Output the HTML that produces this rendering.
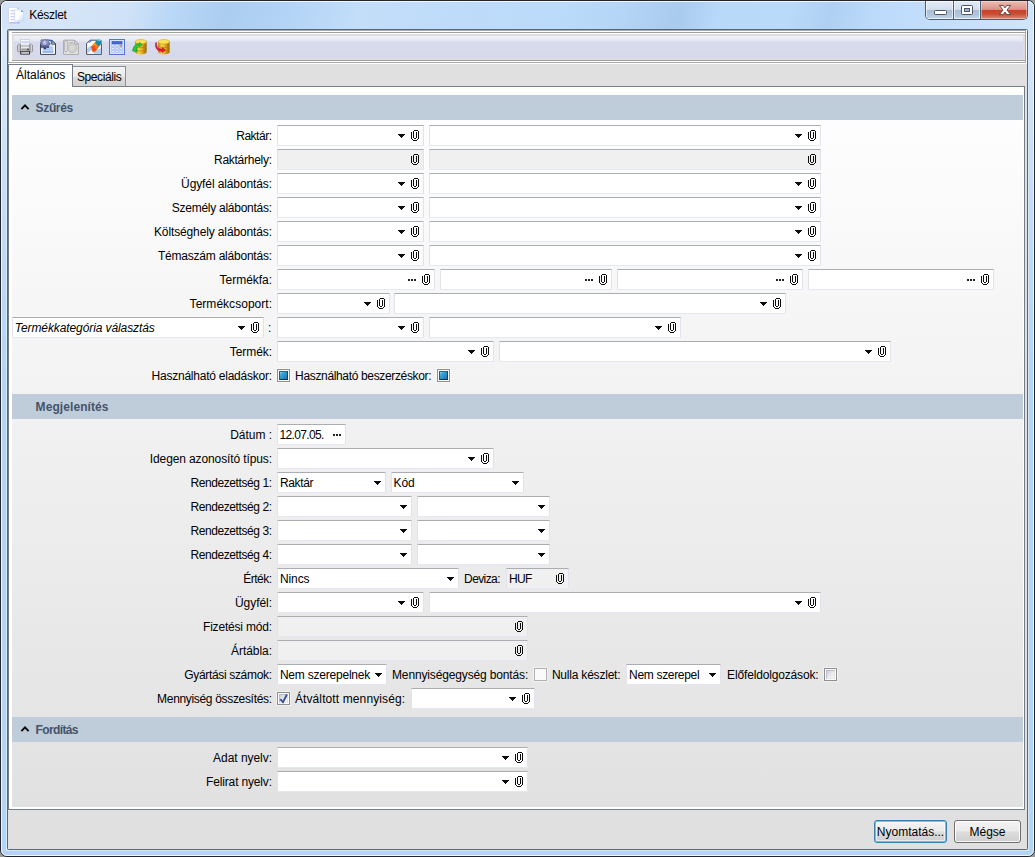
<!DOCTYPE html>
<html><head><meta charset="utf-8"><title>Készlet</title>
<style>
html,body{margin:0;padding:0}
body{width:1035px;height:857px;position:relative;overflow:hidden;background:#9a9a9a;font-family:"Liberation Sans",sans-serif;font-size:12px;color:#000}
div,svg{position:absolute;box-sizing:content-box}
svg{overflow:visible}
#win{left:0;top:0;width:1033px;height:855px;border:1px solid #20252e;border-radius:7px;background:#b3d4f5;overflow:hidden}
#tbar{left:0;top:0;width:1033px;height:29px;background:linear-gradient(104deg,#d3e3f5 0%,#d7e6f7 5%,#cfe2f7 12.5%,#bad8f7 16.5%,#abcdf0 22%,#b3d4f6 28%,#c3def9 35%,#bedbf9 43.5%,#bbdbfa 54%,#b5d5f6 60%,#a9cbee 65.5%,#b9d9f9 69.5%,#badafa 76%,#afd0f2 80%,#bbdafa 84%,#c5dffa 92%,#d0e5fb 100%)}
#winhl{left:1px;top:1px;width:1031px;height:853px;border:1px solid rgba(255,255,255,.8);border-radius:6px}
#frameL{left:2px;top:29px;width:5px;height:821px;background:linear-gradient(90deg,transparent 0,transparent 4px,#d6e9fb 4px),linear-gradient(#dbe8f6 0,#cfe2f6 12%,#bcd8f5 30%,#b3d4f5 45%)}
#frameR{left:1028px;top:29px;width:5px;height:821px;background:linear-gradient(90deg,#d6e9fb 0,#d6e9fb 1px,transparent 1px),linear-gradient(#d5e6f8 0,#cbe0f7 12%,#bcd8f5 30%,#b3d4f5 45%)}
#frameB{left:6px;top:850px;width:1023px;height:5px;background:linear-gradient(#d6e9fb 0,#d6e9fb 1px,#b3d4f5 1px);border-radius:0}
#client{left:7px;top:29px;width:1019px;height:819px;border:1px solid #59677a;border-radius:1.5px;background:#e0e0e0}
#title{left:29.3px;top:7px;letter-spacing:-.3px;font-size:12px;line-height:16px;color:#000;white-space:nowrap}
/* toolbar */
#tbunder{left:8px;top:30px;width:1019px;height:34px;background:#fff}
#tbhost{left:8px;top:30px;width:1016px;height:31px;border:1px solid #a9a9a9;background:#fff}
#tbo{left:12px;top:32px;width:1013px;height:27px;border-top:1px solid #a0a0a0;border-bottom:1px solid #a0a0a0;background:linear-gradient(#fff 0,#fff 1px,#dedede 1px)}
#tb{left:14px;top:36px;width:1009px;height:22px;background:linear-gradient(#eef1fa 0,#e9ebf5 3px,#e4e6f2 5px,#d8dbec 6px,#d6d9ea 100%)}
/* tabs */
#panel{left:8px;top:86px;width:1015px;height:722px;border:1px solid #767d88;background:#fff}
#content{left:12px;top:90px;width:1011px;height:717px;background:linear-gradient(#ffffff 0,#e1e1e1 100%)}
#tab1{left:8px;top:64px;width:63px;height:22px;border:1px solid #767d88;border-bottom:none;background:#fff}
#tab2{left:72px;top:66px;width:53px;height:19px;border:1px solid #8a9099;border-left:none;border-bottom:none;background:linear-gradient(#f3f3f3 0,#ececec 48%,#dedede 52%,#d1d1d1 100%)}
.tabt{font-size:12px;line-height:16px;white-space:nowrap}
.hd{left:12px;width:1011px;height:25px;background:#bfccda}
.f{border:1px solid #e2e3ea;border-top-color:#abadb3;border-bottom-color:#e3e9ef;background:#fff;border-radius:1px}
.f.d{background:#f0f0f0}
.t{white-space:nowrap;font-size:12px;color:#000}
.it{font-style:italic}
.t.ht{font-weight:bold;color:#44546b}
.cb{width:11px;height:11px;border:1px solid #8e8f8f;background:#fdfdfd;box-shadow:0 0 0 1px rgba(255,255,255,.45)}
.cbi{left:1px;top:1px;width:7px;height:7px;border:1px solid #1b5a94;border-color:#2366a0 #0d3f70 #0a3460 #1d5f98;background:linear-gradient(135deg,#86d6f2 0,#2fa9d8 30%,#2b8fc4 60%,#2f6fae 100%)}
.cbg{left:1px;top:1px;width:7px;height:7px;border:1px solid;border-color:#b3b7c3 #dfe0e4 #e6e6e9 #bbbfca;background:linear-gradient(135deg,#cdd1d9 0,#e6e8eb 50%,#f8f8f8 100%)}
.cbd{border-color:#b1b1b1;background:#fafafa}
.btn{height:20px;padding-top:1px;border:1px solid #707070;border-radius:3px;background:linear-gradient(#f4f4f4 0,#ebebeb 48%,#dddddd 52%,#cfcfcf 100%);box-shadow:inset 0 0 0 1px rgba(255,255,255,.85);text-align:center;line-height:21px;font-size:12px;white-space:nowrap}
/* caption buttons */
#cap{left:925px;top:1px;width:101px;height:18px;border:1px solid #4f5b6e;border-top:none;border-radius:0 0 5px 5px;overflow:hidden}
#cap div{top:0;height:18px}
.cbL{background:linear-gradient(#e3ecf6 0,#d3dfee 47%,#a9bdd7 50%,#b3c6de 80%,#c8d7ea 100%);box-shadow:inset 0 0 0 1px rgba(255,255,255,.65)}
.cbX{background:linear-gradient(#ecbdb2 0,#dc9284 47%,#c8422b 50%,#cb4c33 72%,#dd8b76 100%);box-shadow:inset 0 0 0 1px rgba(255,235,230,.45)}
</style></head><body>
<div id="win"><div id="tbar"></div></div><div id="winhl"></div>
<div id="frameL"></div><div id="frameR"></div><div id="frameB"></div>
<svg style="left:8px;top:7px;overflow:hidden" width="17" height="17" viewBox="0 0 17 17" ><rect x="0.6" y="0.6" width="9.6" height="15.2" fill="#fff" stroke="#d0d4f5" stroke-width=".8"/><path d="M2.6 3.6h4 M2.6 6.6h4 M2.6 9.6h4 M2.6 12.6h4" stroke="#cfcff3" stroke-width="1.2"/><path d="M9 0.8 L11 2.4" stroke="#8fd0ee" stroke-width="1"/><path d="M1.5 15.8 H12" stroke="#a9b4ee" stroke-width="1.2"/><path d="M6.6 2.8 H13.2 L15.6 5 V14 H6.6 Z" fill="url(#gDoc)" stroke="#d0d4f5" stroke-width=".8"/><path d="M13.2 2.8 L15.6 5 H13.2 Z" fill="#5c8fe6"/></svg>
<div id="title">Készlet</div>
<div id="cap"><div class="cbL" style="left:0;width:27px"></div><div style="left:27px;width:1px;background:#4f5b6e"></div><div class="cbL" style="left:28px;width:26px"></div><div style="left:54px;width:1px;background:#4f5b6e"></div><div class="cbX" style="left:55px;width:46px"></div></div>
<svg style="left:934px;top:10px;overflow:hidden" width="13" height="5" viewBox="0 0 13 5" ><rect x="0.5" y="0.5" width="12" height="4" rx=".8" fill="#fff" stroke="#4d5566" stroke-width="1"/></svg><svg style="left:961px;top:5px;overflow:hidden" width="12" height="10" viewBox="0 0 12 10" ><rect x="0.5" y="0.5" width="11" height="9" rx=".8" fill="#fff" stroke="#4d5566" stroke-width="1"/><rect x="3.5" y="3.5" width="5" height="3" fill="#9fb4d2" stroke="#4d5566" stroke-width="1"/></svg><svg style="left:998px;top:4px;overflow:hidden" width="14" height="12" viewBox="0 0 14 12" ><path d="M1.4 1.4 H5.2 L7 3.9 L8.8 1.4 H12.6 L9 6 L12.6 10.6 H8.8 L7 8.1 L5.2 10.6 H1.4 L5 6 Z" fill="#fff" stroke="#5a3a3a" stroke-width=".9" stroke-linejoin="round"/></svg>
<div id="client"></div>
<div id="tbunder"></div><div id="tbhost"></div><div id="tbo"></div><div id="tb"></div>
<svg width="0" height="0" style="left:0;top:0"><defs>
<linearGradient id="gPr" x1="0" y1="0" x2="0" y2="1"><stop offset="0" stop-color="#f4f4f4"/><stop offset=".5" stop-color="#dcdcdc"/><stop offset="1" stop-color="#b4b4b4"/></linearGradient>
<linearGradient id="gPs" x1="0" y1="0" x2="1" y2="0"><stop offset="0" stop-color="#8e8e8e"/><stop offset=".2" stop-color="#e6e6e6"/><stop offset=".8" stop-color="#e6e6e6"/><stop offset="1" stop-color="#8e8e8e"/></linearGradient>
<linearGradient id="gGold" x1="0" y1="0" x2="1" y2="0"><stop offset="0" stop-color="#b87c0c"/><stop offset=".3" stop-color="#f6d640"/><stop offset=".6" stop-color="#e4ad22"/><stop offset="1" stop-color="#9a6406"/></linearGradient>
<linearGradient id="gGear" x1="0" y1="0" x2="0" y2="1"><stop offset="0" stop-color="#a4a6cc"/><stop offset=".6" stop-color="#7d80ae"/><stop offset="1" stop-color="#2a3066"/></linearGradient>
<linearGradient id="gPl" x1="0" y1="0" x2="1" y2="0"><stop offset="0" stop-color="#8a8a8a"/><stop offset=".5" stop-color="#e2e2e2"/><stop offset="1" stop-color="#9a9a9a"/></linearGradient>
<linearGradient id="gPl2" x1="0" y1="0" x2="1" y2="0"><stop offset="0" stop-color="#9a9a9a"/><stop offset=".5" stop-color="#e2e2e2"/><stop offset="1" stop-color="#8a8a8a"/></linearGradient>
<linearGradient id="gEr" x1="0" y1="0" x2="1" y2="1"><stop offset="0" stop-color="#ffc21a"/><stop offset="1" stop-color="#f0401a"/></linearGradient>
<linearGradient id="gDoc" x1="0" y1="0" x2="1" y2="1"><stop offset="0" stop-color="#ffffff"/><stop offset=".5" stop-color="#ffffff"/><stop offset="1" stop-color="#b9dcf7"/></linearGradient>
</defs></svg><svg style="left:17px;top:39px;overflow:hidden" width="16" height="16" viewBox="0 0 16 16" ><rect x="3.6" y="0.4" width="9" height="6.6" fill="#f6f7ff" stroke="#c2c2c2" stroke-width=".6"/><rect x="4.4" y="2.4" width="7.4" height="1.3" fill="#b7c8fb"/><rect x="4.4" y="4.6" width="7.4" height=".9" fill="#d5ddfb"/><path d="M3.4 5.2 H1.8 Q0.4 5.4 0.4 8 V11.4 Q0.5 13.2 2.4 13.2 H3.4 Z" fill="url(#gPl)" stroke="#6a6a6a" stroke-width=".4"/><path d="M12.8 5.2 H14.4 Q15.8 5.4 15.8 8 V11.4 Q15.7 13.2 13.8 13.2 H12.8 Z" fill="url(#gPl2)" stroke="#6a6a6a" stroke-width=".4"/><rect x="3.4" y="7" width="9.4" height="6" fill="url(#gPr)" stroke="#555" stroke-width=".5"/><rect x="4.4" y="9.6" width="7.6" height="1.8" fill="#9c9c9c"/><rect x="10" y="9.6" width="1.8" height="1.8" fill="#555"/><rect x="3.7" y="12.8" width="8.8" height="2.3" fill="#fff" stroke="#1e1e1e" stroke-width=".9"/></svg><svg style="left:40px;top:39px;overflow:hidden" width="16" height="16" viewBox="0 0 16 16" ><path d="M0.5 5 V15.4 H15.5 V5 L11.8 1.3 H6 Z" fill="#fff" stroke="#2b2f3a" stroke-width=".9"/><path d="M11.6 1 L15.7 5.2 H11.6 Z" fill="#a8b8c4" stroke="#2b2f3a" stroke-width=".7"/><path d="M10 0.8 L12.2 3.8" stroke="#2f6fe2" stroke-width="1.3"/><path d="M12.2 2.2 l1.2 1.4" stroke="#6fa27a" stroke-width="1"/><rect x="2.4" y="8.4" width="11" height="1.1" fill="#6f9bf0"/><rect x="2.4" y="10.4" width="11" height="1.1" fill="#7fa6f2"/><rect x="2.4" y="12.3" width="11" height="1.3" fill="#6693ee"/><rect x="9" y="6.4" width="4.4" height="1" fill="#a9c2f6"/><path d="M10.12 3.79 L10.12 5.61 L8.77 5.69 L8.34 6.74 L9.24 7.75 L7.95 9.04 L6.94 8.14 L5.89 8.57 L5.81 9.92 L3.99 9.92 L3.91 8.57 L2.86 8.14 L1.85 9.04 L0.56 7.75 L1.46 6.74 L1.03 5.69 L-0.32 5.61 L-0.32 3.79 L1.03 3.71 L1.46 2.66 L0.56 1.65 L1.85 0.36 L2.86 1.26 L3.91 0.83 L3.99 -0.52 L5.81 -0.52 L5.89 0.83 L6.94 1.26 L7.95 0.36 L9.24 1.65 L8.34 2.66 L8.77 3.71Z" fill="url(#gGear)" stroke="#262c5e" stroke-width=".5"/><circle cx="4.7" cy="3.9" r="1.9" fill="#c9cdee"/><circle cx="4.6" cy="3.8" r="1.1" fill="#74aaf8"/><circle cx="4.4" cy="3.4" r=".5" fill="#fff"/></svg><svg style="left:63px;top:39px;overflow:hidden" width="16" height="16" viewBox="0 0 16 16" ><path d="M0.6 1.2 V15.4 H15.4 V5.2 L11.6 1.2 Z" fill="#e3e3e3" stroke="#a9a9a9" stroke-width="1"/><path d="M11.4 1 L15.6 5.4 H11.4 Z" fill="#d0d0d0" stroke="#a9a9a9" stroke-width=".8"/><rect x="1.8" y="1.6" width="2.4" height="11.2" rx="1.2" fill="#f2f2f2" stroke="#9b9b9b" stroke-width=".8"/><circle cx="9.2" cy="9" r="4.6" fill="#d2d2d2" stroke="#b5b5b5" stroke-width=".8"/><circle cx="9.2" cy="9" r="2.6" fill="#e6e6e6" stroke="#bdbdbd" stroke-width=".6"/><circle cx="9.2" cy="9" r="1" fill="#c4c4c4"/><path d="M5 4 L10 3.2" stroke="#bbb" stroke-width="1"/></svg><svg style="left:86px;top:39px;overflow:hidden" width="16" height="16" viewBox="0 0 16 16" ><path d="M0.6 4.6 V15.4 H15.4 V5 L11.6 1.2 H4 Z" fill="#fff" stroke="#2e3340" stroke-width=".85"/><path d="M1.2 14.8 V9.5 L4.5 6.8 L7 10 L9.5 12 L14.8 9 V14.8 Z" fill="#a9cdf6"/><path d="M1.2 14.8 L5.2 11 L8.4 14.8 Z" fill="#fff"/><path d="M3 3.6 L5.2 1.4" stroke="#4a78d8" stroke-width="1.3"/><path d="M4.6 7.8 L10.4 1.4 L15.6 3.4 L10.2 12 L6.6 13.2 Z" fill="url(#gEr)"/><path d="M10.2 1.6 L12.6 0.4 L15.9 1.6 L15.4 4.6 L13 7.4 L9.2 4 Z" fill="#178aa8"/><path d="M10.6 1.2 L13 0.2 L15.9 1.3 L13.6 2.6 Z" fill="#5fc4d8"/><path d="M5.2 7.6 L7 12.6 L10 11.6 L8.6 6.2 Z" fill="#e8351c" opacity=".75"/></svg><svg style="left:109px;top:39px;overflow:hidden" width="16" height="16" viewBox="0 0 16 16" ><rect x="0.5" y="0.5" width="15" height="15" fill="#c2d3f8" stroke="#5876c9" stroke-width="1"/><rect x="1.6" y="1.6" width="12.8" height="12.8" fill="none" stroke="#dbe6fd" stroke-width=".8"/><rect x="3" y="2.4" width="10" height="2.6" fill="#4468d6" stroke="#2f4fb2" stroke-width=".5"/><circle cx="4" cy="6.6" r="1.15" fill="#fbfcff" stroke="#8aa3e6" stroke-width=".5"/><circle cx="8" cy="6.6" r="1.15" fill="#fbfcff" stroke="#8aa3e6" stroke-width=".5"/><circle cx="12" cy="6.6" r="1.15" fill="#f08a3c" stroke="#8aa3e6" stroke-width=".5"/><circle cx="4" cy="9.6" r="1.15" fill="#fbfcff" stroke="#8aa3e6" stroke-width=".5"/><circle cx="8" cy="9.6" r="1.15" fill="#fbfcff" stroke="#8aa3e6" stroke-width=".5"/><circle cx="12" cy="9.6" r="1.15" fill="#fbfcff" stroke="#8aa3e6" stroke-width=".5"/><circle cx="4" cy="12.6" r="1.15" fill="#fbfcff" stroke="#8aa3e6" stroke-width=".5"/><circle cx="8" cy="12.6" r="1.15" fill="#fbfcff" stroke="#8aa3e6" stroke-width=".5"/><circle cx="12" cy="12.6" r="1.15" fill="#fbfcff" stroke="#8aa3e6" stroke-width=".5"/></svg><svg style="left:132px;top:39px;overflow:hidden" width="17" height="16" viewBox="0 0 17 16" ><path d="M3.2 2.6 V13 A5 2.3 0 0 0 14.6 13 V2.6 Z" fill="url(#gGold)"/><ellipse cx="8.9" cy="2.7" rx="5.7" ry="2.2" fill="#f9e35a" stroke="#c99a1a" stroke-width=".5"/><path d="M3.2 6.4 A5.7 2.2 0 0 0 14.6 6.4" fill="none" stroke="#a8730c" stroke-width=".7" opacity=".8"/><path d="M3.2 9.8 A5.7 2.2 0 0 0 14.6 9.8" fill="none" stroke="#a8730c" stroke-width=".7" opacity=".8"/><path d="M0.6 12 C1.2 7.8 3 4.8 7.8 4.6 L7.6 3.4 L10.2 5.6 L7.4 7.8 L7.5 6.6 C5.2 7 4.4 9.4 5 12.6 Z" fill="#22cc3a" stroke="#0d8f22" stroke-width=".6"/></svg><svg style="left:155px;top:39px;overflow:hidden" width="17" height="16" viewBox="0 0 17 16" ><path d="M3.2 2.6 V13 A5 2.3 0 0 0 14.6 13 V2.6 Z" fill="url(#gGold)"/><ellipse cx="8.9" cy="2.7" rx="5.7" ry="2.2" fill="#f9e35a" stroke="#c99a1a" stroke-width=".5"/><path d="M3.2 6.4 A5.7 2.2 0 0 0 14.6 6.4" fill="none" stroke="#a8730c" stroke-width=".7" opacity=".8"/><path d="M3.2 9.8 A5.7 2.2 0 0 0 14.6 9.8" fill="none" stroke="#a8730c" stroke-width=".7" opacity=".8"/><path d="M1.4 3.4 C1.2 8 3 10 7.4 10 L7.2 8.6 L10.4 11 L7 13.6 L7.2 12.2 C2.6 12.6 0 9.4 0.6 4 Z" fill="#f0143c" stroke="#b00d2a" stroke-width=".6"/></svg>
<div id="panel"></div><div id="content"></div>
<div id="tab2"></div><div id="tab1"></div>
<div class="tabt" style="left:16px;top:67px">Általános</div>
<div class="tabt" style="left:77px;top:69px;letter-spacing:-.42px">Speciális</div>
<div class="hd" style="top:95px"></div>
<svg class="i" style="left:20px;top:103px" width="10" height="7" viewBox="0 0 10 7"><path d="M1.4 6.1 L5 2.3 L8.6 6.1" fill="none" stroke="#0a0a0a" stroke-width="1.9"/></svg>
<div class="t ht" style="left:35.6px;top:96px;height:25px;line-height:25px;letter-spacing:-0.352px;">Szűrés</div>
<div class="t " style="right:763.48px;top:126px;height:21px;line-height:21px;letter-spacing:-0.481px;">Raktár:</div>
<div class="f" style="left:277px;top:125px;width:145px;height:19px"></div>
<svg class="i" style="left:411px;top:130px" width="8" height="11" viewBox="0 0 8 11" shape-rendering="crispEdges"><path d="M3 0h1v1h-1zM4 0h1v1h-1zM5 0h1v1h-1zM6 0h1v1h-1zM2 1h1v1h-1zM7 1h1v1h-1zM0 2h1v1h-1zM2 2h1v1h-1zM5 2h1v1h-1zM7 2h1v1h-1zM0 3h1v1h-1zM2 3h1v1h-1zM5 3h1v1h-1zM7 3h1v1h-1zM0 4h1v1h-1zM2 4h1v1h-1zM5 4h1v1h-1zM7 4h1v1h-1zM0 5h1v1h-1zM2 5h1v1h-1zM5 5h1v1h-1zM7 5h1v1h-1zM0 6h1v1h-1zM2 6h1v1h-1zM5 6h1v1h-1zM7 6h1v1h-1zM0 7h1v1h-1zM2 7h1v1h-1zM5 7h1v1h-1zM7 7h1v1h-1zM0 8h1v1h-1zM3 8h1v1h-1zM4 8h1v1h-1zM7 8h1v1h-1zM1 9h1v1h-1zM6 9h1v1h-1zM2 10h1v1h-1zM3 10h1v1h-1zM4 10h1v1h-1zM5 10h1v1h-1z" fill="#0c0c0c"/></svg>
<svg class="i" style="left:398px;top:134px" width="7" height="4" viewBox="0 0 7 4"><path d="M0 0h7v1h-7z M1 1h5v1h-5z M2 2h3v1h-3z M3 3h1v1h-1z" fill="#0c0c0c" shape-rendering="crispEdges"/></svg>
<div class="f" style="left:429px;top:125px;width:390px;height:19px"></div>
<svg class="i" style="left:808px;top:130px" width="8" height="11" viewBox="0 0 8 11" shape-rendering="crispEdges"><path d="M3 0h1v1h-1zM4 0h1v1h-1zM5 0h1v1h-1zM6 0h1v1h-1zM2 1h1v1h-1zM7 1h1v1h-1zM0 2h1v1h-1zM2 2h1v1h-1zM5 2h1v1h-1zM7 2h1v1h-1zM0 3h1v1h-1zM2 3h1v1h-1zM5 3h1v1h-1zM7 3h1v1h-1zM0 4h1v1h-1zM2 4h1v1h-1zM5 4h1v1h-1zM7 4h1v1h-1zM0 5h1v1h-1zM2 5h1v1h-1zM5 5h1v1h-1zM7 5h1v1h-1zM0 6h1v1h-1zM2 6h1v1h-1zM5 6h1v1h-1zM7 6h1v1h-1zM0 7h1v1h-1zM2 7h1v1h-1zM5 7h1v1h-1zM7 7h1v1h-1zM0 8h1v1h-1zM3 8h1v1h-1zM4 8h1v1h-1zM7 8h1v1h-1zM1 9h1v1h-1zM6 9h1v1h-1zM2 10h1v1h-1zM3 10h1v1h-1zM4 10h1v1h-1zM5 10h1v1h-1z" fill="#0c0c0c"/></svg>
<svg class="i" style="left:795px;top:134px" width="7" height="4" viewBox="0 0 7 4"><path d="M0 0h7v1h-7z M1 1h5v1h-5z M2 2h3v1h-3z M3 3h1v1h-1z" fill="#0c0c0c" shape-rendering="crispEdges"/></svg>
<div class="t " style="right:763.27px;top:150px;height:21px;line-height:21px;letter-spacing:-0.270px;">Raktárhely:</div>
<div class="f d" style="left:277px;top:149px;width:145px;height:19px"></div>
<svg class="i" style="left:411px;top:154px" width="8" height="11" viewBox="0 0 8 11" shape-rendering="crispEdges"><path d="M3 0h1v1h-1zM4 0h1v1h-1zM5 0h1v1h-1zM6 0h1v1h-1zM2 1h1v1h-1zM7 1h1v1h-1zM0 2h1v1h-1zM2 2h1v1h-1zM5 2h1v1h-1zM7 2h1v1h-1zM0 3h1v1h-1zM2 3h1v1h-1zM5 3h1v1h-1zM7 3h1v1h-1zM0 4h1v1h-1zM2 4h1v1h-1zM5 4h1v1h-1zM7 4h1v1h-1zM0 5h1v1h-1zM2 5h1v1h-1zM5 5h1v1h-1zM7 5h1v1h-1zM0 6h1v1h-1zM2 6h1v1h-1zM5 6h1v1h-1zM7 6h1v1h-1zM0 7h1v1h-1zM2 7h1v1h-1zM5 7h1v1h-1zM7 7h1v1h-1zM0 8h1v1h-1zM3 8h1v1h-1zM4 8h1v1h-1zM7 8h1v1h-1zM1 9h1v1h-1zM6 9h1v1h-1zM2 10h1v1h-1zM3 10h1v1h-1zM4 10h1v1h-1zM5 10h1v1h-1z" fill="#0c0c0c"/></svg>
<div class="f d" style="left:429px;top:149px;width:390px;height:19px"></div>
<svg class="i" style="left:808px;top:154px" width="8" height="11" viewBox="0 0 8 11" shape-rendering="crispEdges"><path d="M3 0h1v1h-1zM4 0h1v1h-1zM5 0h1v1h-1zM6 0h1v1h-1zM2 1h1v1h-1zM7 1h1v1h-1zM0 2h1v1h-1zM2 2h1v1h-1zM5 2h1v1h-1zM7 2h1v1h-1zM0 3h1v1h-1zM2 3h1v1h-1zM5 3h1v1h-1zM7 3h1v1h-1zM0 4h1v1h-1zM2 4h1v1h-1zM5 4h1v1h-1zM7 4h1v1h-1zM0 5h1v1h-1zM2 5h1v1h-1zM5 5h1v1h-1zM7 5h1v1h-1zM0 6h1v1h-1zM2 6h1v1h-1zM5 6h1v1h-1zM7 6h1v1h-1zM0 7h1v1h-1zM2 7h1v1h-1zM5 7h1v1h-1zM7 7h1v1h-1zM0 8h1v1h-1zM3 8h1v1h-1zM4 8h1v1h-1zM7 8h1v1h-1zM1 9h1v1h-1zM6 9h1v1h-1zM2 10h1v1h-1zM3 10h1v1h-1zM4 10h1v1h-1zM5 10h1v1h-1z" fill="#0c0c0c"/></svg>
<div class="t " style="right:763.11px;top:174px;height:21px;line-height:21px;letter-spacing:-0.115px;">Ügyfél alábontás:</div>
<div class="f" style="left:277px;top:173px;width:145px;height:19px"></div>
<svg class="i" style="left:411px;top:178px" width="8" height="11" viewBox="0 0 8 11" shape-rendering="crispEdges"><path d="M3 0h1v1h-1zM4 0h1v1h-1zM5 0h1v1h-1zM6 0h1v1h-1zM2 1h1v1h-1zM7 1h1v1h-1zM0 2h1v1h-1zM2 2h1v1h-1zM5 2h1v1h-1zM7 2h1v1h-1zM0 3h1v1h-1zM2 3h1v1h-1zM5 3h1v1h-1zM7 3h1v1h-1zM0 4h1v1h-1zM2 4h1v1h-1zM5 4h1v1h-1zM7 4h1v1h-1zM0 5h1v1h-1zM2 5h1v1h-1zM5 5h1v1h-1zM7 5h1v1h-1zM0 6h1v1h-1zM2 6h1v1h-1zM5 6h1v1h-1zM7 6h1v1h-1zM0 7h1v1h-1zM2 7h1v1h-1zM5 7h1v1h-1zM7 7h1v1h-1zM0 8h1v1h-1zM3 8h1v1h-1zM4 8h1v1h-1zM7 8h1v1h-1zM1 9h1v1h-1zM6 9h1v1h-1zM2 10h1v1h-1zM3 10h1v1h-1zM4 10h1v1h-1zM5 10h1v1h-1z" fill="#0c0c0c"/></svg>
<svg class="i" style="left:398px;top:182px" width="7" height="4" viewBox="0 0 7 4"><path d="M0 0h7v1h-7z M1 1h5v1h-5z M2 2h3v1h-3z M3 3h1v1h-1z" fill="#0c0c0c" shape-rendering="crispEdges"/></svg>
<div class="f" style="left:429px;top:173px;width:390px;height:19px"></div>
<svg class="i" style="left:808px;top:178px" width="8" height="11" viewBox="0 0 8 11" shape-rendering="crispEdges"><path d="M3 0h1v1h-1zM4 0h1v1h-1zM5 0h1v1h-1zM6 0h1v1h-1zM2 1h1v1h-1zM7 1h1v1h-1zM0 2h1v1h-1zM2 2h1v1h-1zM5 2h1v1h-1zM7 2h1v1h-1zM0 3h1v1h-1zM2 3h1v1h-1zM5 3h1v1h-1zM7 3h1v1h-1zM0 4h1v1h-1zM2 4h1v1h-1zM5 4h1v1h-1zM7 4h1v1h-1zM0 5h1v1h-1zM2 5h1v1h-1zM5 5h1v1h-1zM7 5h1v1h-1zM0 6h1v1h-1zM2 6h1v1h-1zM5 6h1v1h-1zM7 6h1v1h-1zM0 7h1v1h-1zM2 7h1v1h-1zM5 7h1v1h-1zM7 7h1v1h-1zM0 8h1v1h-1zM3 8h1v1h-1zM4 8h1v1h-1zM7 8h1v1h-1zM1 9h1v1h-1zM6 9h1v1h-1zM2 10h1v1h-1zM3 10h1v1h-1zM4 10h1v1h-1zM5 10h1v1h-1z" fill="#0c0c0c"/></svg>
<svg class="i" style="left:795px;top:182px" width="7" height="4" viewBox="0 0 7 4"><path d="M0 0h7v1h-7z M1 1h5v1h-5z M2 2h3v1h-3z M3 3h1v1h-1z" fill="#0c0c0c" shape-rendering="crispEdges"/></svg>
<div class="t " style="right:763.27px;top:198px;height:21px;line-height:21px;letter-spacing:-0.267px;">Személy alábontás:</div>
<div class="f" style="left:277px;top:197px;width:145px;height:19px"></div>
<svg class="i" style="left:411px;top:202px" width="8" height="11" viewBox="0 0 8 11" shape-rendering="crispEdges"><path d="M3 0h1v1h-1zM4 0h1v1h-1zM5 0h1v1h-1zM6 0h1v1h-1zM2 1h1v1h-1zM7 1h1v1h-1zM0 2h1v1h-1zM2 2h1v1h-1zM5 2h1v1h-1zM7 2h1v1h-1zM0 3h1v1h-1zM2 3h1v1h-1zM5 3h1v1h-1zM7 3h1v1h-1zM0 4h1v1h-1zM2 4h1v1h-1zM5 4h1v1h-1zM7 4h1v1h-1zM0 5h1v1h-1zM2 5h1v1h-1zM5 5h1v1h-1zM7 5h1v1h-1zM0 6h1v1h-1zM2 6h1v1h-1zM5 6h1v1h-1zM7 6h1v1h-1zM0 7h1v1h-1zM2 7h1v1h-1zM5 7h1v1h-1zM7 7h1v1h-1zM0 8h1v1h-1zM3 8h1v1h-1zM4 8h1v1h-1zM7 8h1v1h-1zM1 9h1v1h-1zM6 9h1v1h-1zM2 10h1v1h-1zM3 10h1v1h-1zM4 10h1v1h-1zM5 10h1v1h-1z" fill="#0c0c0c"/></svg>
<svg class="i" style="left:398px;top:206px" width="7" height="4" viewBox="0 0 7 4"><path d="M0 0h7v1h-7z M1 1h5v1h-5z M2 2h3v1h-3z M3 3h1v1h-1z" fill="#0c0c0c" shape-rendering="crispEdges"/></svg>
<div class="f" style="left:429px;top:197px;width:390px;height:19px"></div>
<svg class="i" style="left:808px;top:202px" width="8" height="11" viewBox="0 0 8 11" shape-rendering="crispEdges"><path d="M3 0h1v1h-1zM4 0h1v1h-1zM5 0h1v1h-1zM6 0h1v1h-1zM2 1h1v1h-1zM7 1h1v1h-1zM0 2h1v1h-1zM2 2h1v1h-1zM5 2h1v1h-1zM7 2h1v1h-1zM0 3h1v1h-1zM2 3h1v1h-1zM5 3h1v1h-1zM7 3h1v1h-1zM0 4h1v1h-1zM2 4h1v1h-1zM5 4h1v1h-1zM7 4h1v1h-1zM0 5h1v1h-1zM2 5h1v1h-1zM5 5h1v1h-1zM7 5h1v1h-1zM0 6h1v1h-1zM2 6h1v1h-1zM5 6h1v1h-1zM7 6h1v1h-1zM0 7h1v1h-1zM2 7h1v1h-1zM5 7h1v1h-1zM7 7h1v1h-1zM0 8h1v1h-1zM3 8h1v1h-1zM4 8h1v1h-1zM7 8h1v1h-1zM1 9h1v1h-1zM6 9h1v1h-1zM2 10h1v1h-1zM3 10h1v1h-1zM4 10h1v1h-1zM5 10h1v1h-1z" fill="#0c0c0c"/></svg>
<svg class="i" style="left:795px;top:206px" width="7" height="4" viewBox="0 0 7 4"><path d="M0 0h7v1h-7z M1 1h5v1h-5z M2 2h3v1h-3z M3 3h1v1h-1z" fill="#0c0c0c" shape-rendering="crispEdges"/></svg>
<div class="t " style="right:763.13px;top:222px;height:21px;line-height:21px;letter-spacing:-0.131px;">Költséghely alábontás:</div>
<div class="f" style="left:277px;top:221px;width:145px;height:19px"></div>
<svg class="i" style="left:411px;top:226px" width="8" height="11" viewBox="0 0 8 11" shape-rendering="crispEdges"><path d="M3 0h1v1h-1zM4 0h1v1h-1zM5 0h1v1h-1zM6 0h1v1h-1zM2 1h1v1h-1zM7 1h1v1h-1zM0 2h1v1h-1zM2 2h1v1h-1zM5 2h1v1h-1zM7 2h1v1h-1zM0 3h1v1h-1zM2 3h1v1h-1zM5 3h1v1h-1zM7 3h1v1h-1zM0 4h1v1h-1zM2 4h1v1h-1zM5 4h1v1h-1zM7 4h1v1h-1zM0 5h1v1h-1zM2 5h1v1h-1zM5 5h1v1h-1zM7 5h1v1h-1zM0 6h1v1h-1zM2 6h1v1h-1zM5 6h1v1h-1zM7 6h1v1h-1zM0 7h1v1h-1zM2 7h1v1h-1zM5 7h1v1h-1zM7 7h1v1h-1zM0 8h1v1h-1zM3 8h1v1h-1zM4 8h1v1h-1zM7 8h1v1h-1zM1 9h1v1h-1zM6 9h1v1h-1zM2 10h1v1h-1zM3 10h1v1h-1zM4 10h1v1h-1zM5 10h1v1h-1z" fill="#0c0c0c"/></svg>
<svg class="i" style="left:398px;top:230px" width="7" height="4" viewBox="0 0 7 4"><path d="M0 0h7v1h-7z M1 1h5v1h-5z M2 2h3v1h-3z M3 3h1v1h-1z" fill="#0c0c0c" shape-rendering="crispEdges"/></svg>
<div class="f" style="left:429px;top:221px;width:390px;height:19px"></div>
<svg class="i" style="left:808px;top:226px" width="8" height="11" viewBox="0 0 8 11" shape-rendering="crispEdges"><path d="M3 0h1v1h-1zM4 0h1v1h-1zM5 0h1v1h-1zM6 0h1v1h-1zM2 1h1v1h-1zM7 1h1v1h-1zM0 2h1v1h-1zM2 2h1v1h-1zM5 2h1v1h-1zM7 2h1v1h-1zM0 3h1v1h-1zM2 3h1v1h-1zM5 3h1v1h-1zM7 3h1v1h-1zM0 4h1v1h-1zM2 4h1v1h-1zM5 4h1v1h-1zM7 4h1v1h-1zM0 5h1v1h-1zM2 5h1v1h-1zM5 5h1v1h-1zM7 5h1v1h-1zM0 6h1v1h-1zM2 6h1v1h-1zM5 6h1v1h-1zM7 6h1v1h-1zM0 7h1v1h-1zM2 7h1v1h-1zM5 7h1v1h-1zM7 7h1v1h-1zM0 8h1v1h-1zM3 8h1v1h-1zM4 8h1v1h-1zM7 8h1v1h-1zM1 9h1v1h-1zM6 9h1v1h-1zM2 10h1v1h-1zM3 10h1v1h-1zM4 10h1v1h-1zM5 10h1v1h-1z" fill="#0c0c0c"/></svg>
<svg class="i" style="left:795px;top:230px" width="7" height="4" viewBox="0 0 7 4"><path d="M0 0h7v1h-7z M1 1h5v1h-5z M2 2h3v1h-3z M3 3h1v1h-1z" fill="#0c0c0c" shape-rendering="crispEdges"/></svg>
<div class="t " style="right:763.23px;top:246px;height:21px;line-height:21px;letter-spacing:-0.226px;">Témaszám alábontás:</div>
<div class="f" style="left:277px;top:245px;width:145px;height:19px"></div>
<svg class="i" style="left:411px;top:250px" width="8" height="11" viewBox="0 0 8 11" shape-rendering="crispEdges"><path d="M3 0h1v1h-1zM4 0h1v1h-1zM5 0h1v1h-1zM6 0h1v1h-1zM2 1h1v1h-1zM7 1h1v1h-1zM0 2h1v1h-1zM2 2h1v1h-1zM5 2h1v1h-1zM7 2h1v1h-1zM0 3h1v1h-1zM2 3h1v1h-1zM5 3h1v1h-1zM7 3h1v1h-1zM0 4h1v1h-1zM2 4h1v1h-1zM5 4h1v1h-1zM7 4h1v1h-1zM0 5h1v1h-1zM2 5h1v1h-1zM5 5h1v1h-1zM7 5h1v1h-1zM0 6h1v1h-1zM2 6h1v1h-1zM5 6h1v1h-1zM7 6h1v1h-1zM0 7h1v1h-1zM2 7h1v1h-1zM5 7h1v1h-1zM7 7h1v1h-1zM0 8h1v1h-1zM3 8h1v1h-1zM4 8h1v1h-1zM7 8h1v1h-1zM1 9h1v1h-1zM6 9h1v1h-1zM2 10h1v1h-1zM3 10h1v1h-1zM4 10h1v1h-1zM5 10h1v1h-1z" fill="#0c0c0c"/></svg>
<svg class="i" style="left:398px;top:254px" width="7" height="4" viewBox="0 0 7 4"><path d="M0 0h7v1h-7z M1 1h5v1h-5z M2 2h3v1h-3z M3 3h1v1h-1z" fill="#0c0c0c" shape-rendering="crispEdges"/></svg>
<div class="f" style="left:429px;top:245px;width:390px;height:19px"></div>
<svg class="i" style="left:808px;top:250px" width="8" height="11" viewBox="0 0 8 11" shape-rendering="crispEdges"><path d="M3 0h1v1h-1zM4 0h1v1h-1zM5 0h1v1h-1zM6 0h1v1h-1zM2 1h1v1h-1zM7 1h1v1h-1zM0 2h1v1h-1zM2 2h1v1h-1zM5 2h1v1h-1zM7 2h1v1h-1zM0 3h1v1h-1zM2 3h1v1h-1zM5 3h1v1h-1zM7 3h1v1h-1zM0 4h1v1h-1zM2 4h1v1h-1zM5 4h1v1h-1zM7 4h1v1h-1zM0 5h1v1h-1zM2 5h1v1h-1zM5 5h1v1h-1zM7 5h1v1h-1zM0 6h1v1h-1zM2 6h1v1h-1zM5 6h1v1h-1zM7 6h1v1h-1zM0 7h1v1h-1zM2 7h1v1h-1zM5 7h1v1h-1zM7 7h1v1h-1zM0 8h1v1h-1zM3 8h1v1h-1zM4 8h1v1h-1zM7 8h1v1h-1zM1 9h1v1h-1zM6 9h1v1h-1zM2 10h1v1h-1zM3 10h1v1h-1zM4 10h1v1h-1zM5 10h1v1h-1z" fill="#0c0c0c"/></svg>
<svg class="i" style="left:795px;top:254px" width="7" height="4" viewBox="0 0 7 4"><path d="M0 0h7v1h-7z M1 1h5v1h-5z M2 2h3v1h-3z M3 3h1v1h-1z" fill="#0c0c0c" shape-rendering="crispEdges"/></svg>
<div class="t " style="right:763.04px;top:270px;height:21px;line-height:21px;letter-spacing:-0.036px;">Termékfa:</div>
<div class="f" style="left:277px;top:269px;width:156px;height:19px"></div>
<svg class="i" style="left:422px;top:274px" width="8" height="11" viewBox="0 0 8 11" shape-rendering="crispEdges"><path d="M3 0h1v1h-1zM4 0h1v1h-1zM5 0h1v1h-1zM6 0h1v1h-1zM2 1h1v1h-1zM7 1h1v1h-1zM0 2h1v1h-1zM2 2h1v1h-1zM5 2h1v1h-1zM7 2h1v1h-1zM0 3h1v1h-1zM2 3h1v1h-1zM5 3h1v1h-1zM7 3h1v1h-1zM0 4h1v1h-1zM2 4h1v1h-1zM5 4h1v1h-1zM7 4h1v1h-1zM0 5h1v1h-1zM2 5h1v1h-1zM5 5h1v1h-1zM7 5h1v1h-1zM0 6h1v1h-1zM2 6h1v1h-1zM5 6h1v1h-1zM7 6h1v1h-1zM0 7h1v1h-1zM2 7h1v1h-1zM5 7h1v1h-1zM7 7h1v1h-1zM0 8h1v1h-1zM3 8h1v1h-1zM4 8h1v1h-1zM7 8h1v1h-1zM1 9h1v1h-1zM6 9h1v1h-1zM2 10h1v1h-1zM3 10h1v1h-1zM4 10h1v1h-1zM5 10h1v1h-1z" fill="#0c0c0c"/></svg>
<svg class="i" style="left:408px;top:279px" width="8" height="2" viewBox="0 0 8 2"><path d="M0 0h2v2h-2z M3 0h2v2h-2z M6 0h2v2h-2z" fill="#222"/></svg>
<div class="f" style="left:440px;top:269px;width:170px;height:19px"></div>
<svg class="i" style="left:599px;top:274px" width="8" height="11" viewBox="0 0 8 11" shape-rendering="crispEdges"><path d="M3 0h1v1h-1zM4 0h1v1h-1zM5 0h1v1h-1zM6 0h1v1h-1zM2 1h1v1h-1zM7 1h1v1h-1zM0 2h1v1h-1zM2 2h1v1h-1zM5 2h1v1h-1zM7 2h1v1h-1zM0 3h1v1h-1zM2 3h1v1h-1zM5 3h1v1h-1zM7 3h1v1h-1zM0 4h1v1h-1zM2 4h1v1h-1zM5 4h1v1h-1zM7 4h1v1h-1zM0 5h1v1h-1zM2 5h1v1h-1zM5 5h1v1h-1zM7 5h1v1h-1zM0 6h1v1h-1zM2 6h1v1h-1zM5 6h1v1h-1zM7 6h1v1h-1zM0 7h1v1h-1zM2 7h1v1h-1zM5 7h1v1h-1zM7 7h1v1h-1zM0 8h1v1h-1zM3 8h1v1h-1zM4 8h1v1h-1zM7 8h1v1h-1zM1 9h1v1h-1zM6 9h1v1h-1zM2 10h1v1h-1zM3 10h1v1h-1zM4 10h1v1h-1zM5 10h1v1h-1z" fill="#0c0c0c"/></svg>
<svg class="i" style="left:585px;top:279px" width="8" height="2" viewBox="0 0 8 2"><path d="M0 0h2v2h-2z M3 0h2v2h-2z M6 0h2v2h-2z" fill="#222"/></svg>
<div class="f" style="left:617px;top:269px;width:184px;height:19px"></div>
<svg class="i" style="left:790px;top:274px" width="8" height="11" viewBox="0 0 8 11" shape-rendering="crispEdges"><path d="M3 0h1v1h-1zM4 0h1v1h-1zM5 0h1v1h-1zM6 0h1v1h-1zM2 1h1v1h-1zM7 1h1v1h-1zM0 2h1v1h-1zM2 2h1v1h-1zM5 2h1v1h-1zM7 2h1v1h-1zM0 3h1v1h-1zM2 3h1v1h-1zM5 3h1v1h-1zM7 3h1v1h-1zM0 4h1v1h-1zM2 4h1v1h-1zM5 4h1v1h-1zM7 4h1v1h-1zM0 5h1v1h-1zM2 5h1v1h-1zM5 5h1v1h-1zM7 5h1v1h-1zM0 6h1v1h-1zM2 6h1v1h-1zM5 6h1v1h-1zM7 6h1v1h-1zM0 7h1v1h-1zM2 7h1v1h-1zM5 7h1v1h-1zM7 7h1v1h-1zM0 8h1v1h-1zM3 8h1v1h-1zM4 8h1v1h-1zM7 8h1v1h-1zM1 9h1v1h-1zM6 9h1v1h-1zM2 10h1v1h-1zM3 10h1v1h-1zM4 10h1v1h-1zM5 10h1v1h-1z" fill="#0c0c0c"/></svg>
<svg class="i" style="left:776px;top:279px" width="8" height="2" viewBox="0 0 8 2"><path d="M0 0h2v2h-2z M3 0h2v2h-2z M6 0h2v2h-2z" fill="#222"/></svg>
<div class="f" style="left:808px;top:269px;width:184px;height:19px"></div>
<svg class="i" style="left:981px;top:274px" width="8" height="11" viewBox="0 0 8 11" shape-rendering="crispEdges"><path d="M3 0h1v1h-1zM4 0h1v1h-1zM5 0h1v1h-1zM6 0h1v1h-1zM2 1h1v1h-1zM7 1h1v1h-1zM0 2h1v1h-1zM2 2h1v1h-1zM5 2h1v1h-1zM7 2h1v1h-1zM0 3h1v1h-1zM2 3h1v1h-1zM5 3h1v1h-1zM7 3h1v1h-1zM0 4h1v1h-1zM2 4h1v1h-1zM5 4h1v1h-1zM7 4h1v1h-1zM0 5h1v1h-1zM2 5h1v1h-1zM5 5h1v1h-1zM7 5h1v1h-1zM0 6h1v1h-1zM2 6h1v1h-1zM5 6h1v1h-1zM7 6h1v1h-1zM0 7h1v1h-1zM2 7h1v1h-1zM5 7h1v1h-1zM7 7h1v1h-1zM0 8h1v1h-1zM3 8h1v1h-1zM4 8h1v1h-1zM7 8h1v1h-1zM1 9h1v1h-1zM6 9h1v1h-1zM2 10h1v1h-1zM3 10h1v1h-1zM4 10h1v1h-1zM5 10h1v1h-1z" fill="#0c0c0c"/></svg>
<svg class="i" style="left:967px;top:279px" width="8" height="2" viewBox="0 0 8 2"><path d="M0 0h2v2h-2z M3 0h2v2h-2z M6 0h2v2h-2z" fill="#222"/></svg>
<div class="t " style="right:762.97px;top:294px;height:21px;line-height:21px;letter-spacing:0.028px;">Termékcsoport:</div>
<div class="f" style="left:277px;top:293px;width:111px;height:19px"></div>
<svg class="i" style="left:377px;top:298px" width="8" height="11" viewBox="0 0 8 11" shape-rendering="crispEdges"><path d="M3 0h1v1h-1zM4 0h1v1h-1zM5 0h1v1h-1zM6 0h1v1h-1zM2 1h1v1h-1zM7 1h1v1h-1zM0 2h1v1h-1zM2 2h1v1h-1zM5 2h1v1h-1zM7 2h1v1h-1zM0 3h1v1h-1zM2 3h1v1h-1zM5 3h1v1h-1zM7 3h1v1h-1zM0 4h1v1h-1zM2 4h1v1h-1zM5 4h1v1h-1zM7 4h1v1h-1zM0 5h1v1h-1zM2 5h1v1h-1zM5 5h1v1h-1zM7 5h1v1h-1zM0 6h1v1h-1zM2 6h1v1h-1zM5 6h1v1h-1zM7 6h1v1h-1zM0 7h1v1h-1zM2 7h1v1h-1zM5 7h1v1h-1zM7 7h1v1h-1zM0 8h1v1h-1zM3 8h1v1h-1zM4 8h1v1h-1zM7 8h1v1h-1zM1 9h1v1h-1zM6 9h1v1h-1zM2 10h1v1h-1zM3 10h1v1h-1zM4 10h1v1h-1zM5 10h1v1h-1z" fill="#0c0c0c"/></svg>
<svg class="i" style="left:364px;top:302px" width="7" height="4" viewBox="0 0 7 4"><path d="M0 0h7v1h-7z M1 1h5v1h-5z M2 2h3v1h-3z M3 3h1v1h-1z" fill="#0c0c0c" shape-rendering="crispEdges"/></svg>
<div class="f" style="left:394px;top:293px;width:390px;height:19px"></div>
<svg class="i" style="left:773px;top:298px" width="8" height="11" viewBox="0 0 8 11" shape-rendering="crispEdges"><path d="M3 0h1v1h-1zM4 0h1v1h-1zM5 0h1v1h-1zM6 0h1v1h-1zM2 1h1v1h-1zM7 1h1v1h-1zM0 2h1v1h-1zM2 2h1v1h-1zM5 2h1v1h-1zM7 2h1v1h-1zM0 3h1v1h-1zM2 3h1v1h-1zM5 3h1v1h-1zM7 3h1v1h-1zM0 4h1v1h-1zM2 4h1v1h-1zM5 4h1v1h-1zM7 4h1v1h-1zM0 5h1v1h-1zM2 5h1v1h-1zM5 5h1v1h-1zM7 5h1v1h-1zM0 6h1v1h-1zM2 6h1v1h-1zM5 6h1v1h-1zM7 6h1v1h-1zM0 7h1v1h-1zM2 7h1v1h-1zM5 7h1v1h-1zM7 7h1v1h-1zM0 8h1v1h-1zM3 8h1v1h-1zM4 8h1v1h-1zM7 8h1v1h-1zM1 9h1v1h-1zM6 9h1v1h-1zM2 10h1v1h-1zM3 10h1v1h-1zM4 10h1v1h-1zM5 10h1v1h-1z" fill="#0c0c0c"/></svg>
<svg class="i" style="left:760px;top:302px" width="7" height="4" viewBox="0 0 7 4"><path d="M0 0h7v1h-7z M1 1h5v1h-5z M2 2h3v1h-3z M3 3h1v1h-1z" fill="#0c0c0c" shape-rendering="crispEdges"/></svg>
<div class="f" style="left:12px;top:317px;width:250px;height:19px"></div>
<svg class="i" style="left:251px;top:322px" width="8" height="11" viewBox="0 0 8 11" shape-rendering="crispEdges"><path d="M3 0h1v1h-1zM4 0h1v1h-1zM5 0h1v1h-1zM6 0h1v1h-1zM2 1h1v1h-1zM7 1h1v1h-1zM0 2h1v1h-1zM2 2h1v1h-1zM5 2h1v1h-1zM7 2h1v1h-1zM0 3h1v1h-1zM2 3h1v1h-1zM5 3h1v1h-1zM7 3h1v1h-1zM0 4h1v1h-1zM2 4h1v1h-1zM5 4h1v1h-1zM7 4h1v1h-1zM0 5h1v1h-1zM2 5h1v1h-1zM5 5h1v1h-1zM7 5h1v1h-1zM0 6h1v1h-1zM2 6h1v1h-1zM5 6h1v1h-1zM7 6h1v1h-1zM0 7h1v1h-1zM2 7h1v1h-1zM5 7h1v1h-1zM7 7h1v1h-1zM0 8h1v1h-1zM3 8h1v1h-1zM4 8h1v1h-1zM7 8h1v1h-1zM1 9h1v1h-1zM6 9h1v1h-1zM2 10h1v1h-1zM3 10h1v1h-1zM4 10h1v1h-1zM5 10h1v1h-1z" fill="#0c0c0c"/></svg>
<svg class="i" style="left:238px;top:326px" width="7" height="4" viewBox="0 0 7 4"><path d="M0 0h7v1h-7z M1 1h5v1h-5z M2 2h3v1h-3z M3 3h1v1h-1z" fill="#0c0c0c" shape-rendering="crispEdges"/></svg>
<div class="t it" style="left:14.8px;top:318px;height:21px;line-height:21px;letter-spacing:-0.096px;">Termékkategória választás</div>
<div class="t " style="left:268.1px;top:318px;height:21px;line-height:21px;letter-spacing:0.056px;">:</div>
<div class="f" style="left:277px;top:317px;width:145px;height:19px"></div>
<svg class="i" style="left:411px;top:322px" width="8" height="11" viewBox="0 0 8 11" shape-rendering="crispEdges"><path d="M3 0h1v1h-1zM4 0h1v1h-1zM5 0h1v1h-1zM6 0h1v1h-1zM2 1h1v1h-1zM7 1h1v1h-1zM0 2h1v1h-1zM2 2h1v1h-1zM5 2h1v1h-1zM7 2h1v1h-1zM0 3h1v1h-1zM2 3h1v1h-1zM5 3h1v1h-1zM7 3h1v1h-1zM0 4h1v1h-1zM2 4h1v1h-1zM5 4h1v1h-1zM7 4h1v1h-1zM0 5h1v1h-1zM2 5h1v1h-1zM5 5h1v1h-1zM7 5h1v1h-1zM0 6h1v1h-1zM2 6h1v1h-1zM5 6h1v1h-1zM7 6h1v1h-1zM0 7h1v1h-1zM2 7h1v1h-1zM5 7h1v1h-1zM7 7h1v1h-1zM0 8h1v1h-1zM3 8h1v1h-1zM4 8h1v1h-1zM7 8h1v1h-1zM1 9h1v1h-1zM6 9h1v1h-1zM2 10h1v1h-1zM3 10h1v1h-1zM4 10h1v1h-1zM5 10h1v1h-1z" fill="#0c0c0c"/></svg>
<svg class="i" style="left:398px;top:326px" width="7" height="4" viewBox="0 0 7 4"><path d="M0 0h7v1h-7z M1 1h5v1h-5z M2 2h3v1h-3z M3 3h1v1h-1z" fill="#0c0c0c" shape-rendering="crispEdges"/></svg>
<div class="f" style="left:429px;top:317px;width:250px;height:19px"></div>
<svg class="i" style="left:668px;top:322px" width="8" height="11" viewBox="0 0 8 11" shape-rendering="crispEdges"><path d="M3 0h1v1h-1zM4 0h1v1h-1zM5 0h1v1h-1zM6 0h1v1h-1zM2 1h1v1h-1zM7 1h1v1h-1zM0 2h1v1h-1zM2 2h1v1h-1zM5 2h1v1h-1zM7 2h1v1h-1zM0 3h1v1h-1zM2 3h1v1h-1zM5 3h1v1h-1zM7 3h1v1h-1zM0 4h1v1h-1zM2 4h1v1h-1zM5 4h1v1h-1zM7 4h1v1h-1zM0 5h1v1h-1zM2 5h1v1h-1zM5 5h1v1h-1zM7 5h1v1h-1zM0 6h1v1h-1zM2 6h1v1h-1zM5 6h1v1h-1zM7 6h1v1h-1zM0 7h1v1h-1zM2 7h1v1h-1zM5 7h1v1h-1zM7 7h1v1h-1zM0 8h1v1h-1zM3 8h1v1h-1zM4 8h1v1h-1zM7 8h1v1h-1zM1 9h1v1h-1zM6 9h1v1h-1zM2 10h1v1h-1zM3 10h1v1h-1zM4 10h1v1h-1zM5 10h1v1h-1z" fill="#0c0c0c"/></svg>
<svg class="i" style="left:655px;top:326px" width="7" height="4" viewBox="0 0 7 4"><path d="M0 0h7v1h-7z M1 1h5v1h-5z M2 2h3v1h-3z M3 3h1v1h-1z" fill="#0c0c0c" shape-rendering="crispEdges"/></svg>
<div class="t " style="right:763.08px;top:342px;height:21px;line-height:21px;letter-spacing:-0.081px;">Termék:</div>
<div class="f" style="left:277px;top:341px;width:215px;height:19px"></div>
<svg class="i" style="left:481px;top:346px" width="8" height="11" viewBox="0 0 8 11" shape-rendering="crispEdges"><path d="M3 0h1v1h-1zM4 0h1v1h-1zM5 0h1v1h-1zM6 0h1v1h-1zM2 1h1v1h-1zM7 1h1v1h-1zM0 2h1v1h-1zM2 2h1v1h-1zM5 2h1v1h-1zM7 2h1v1h-1zM0 3h1v1h-1zM2 3h1v1h-1zM5 3h1v1h-1zM7 3h1v1h-1zM0 4h1v1h-1zM2 4h1v1h-1zM5 4h1v1h-1zM7 4h1v1h-1zM0 5h1v1h-1zM2 5h1v1h-1zM5 5h1v1h-1zM7 5h1v1h-1zM0 6h1v1h-1zM2 6h1v1h-1zM5 6h1v1h-1zM7 6h1v1h-1zM0 7h1v1h-1zM2 7h1v1h-1zM5 7h1v1h-1zM7 7h1v1h-1zM0 8h1v1h-1zM3 8h1v1h-1zM4 8h1v1h-1zM7 8h1v1h-1zM1 9h1v1h-1zM6 9h1v1h-1zM2 10h1v1h-1zM3 10h1v1h-1zM4 10h1v1h-1zM5 10h1v1h-1z" fill="#0c0c0c"/></svg>
<svg class="i" style="left:468px;top:350px" width="7" height="4" viewBox="0 0 7 4"><path d="M0 0h7v1h-7z M1 1h5v1h-5z M2 2h3v1h-3z M3 3h1v1h-1z" fill="#0c0c0c" shape-rendering="crispEdges"/></svg>
<div class="f" style="left:499px;top:341px;width:390px;height:19px"></div>
<svg class="i" style="left:878px;top:346px" width="8" height="11" viewBox="0 0 8 11" shape-rendering="crispEdges"><path d="M3 0h1v1h-1zM4 0h1v1h-1zM5 0h1v1h-1zM6 0h1v1h-1zM2 1h1v1h-1zM7 1h1v1h-1zM0 2h1v1h-1zM2 2h1v1h-1zM5 2h1v1h-1zM7 2h1v1h-1zM0 3h1v1h-1zM2 3h1v1h-1zM5 3h1v1h-1zM7 3h1v1h-1zM0 4h1v1h-1zM2 4h1v1h-1zM5 4h1v1h-1zM7 4h1v1h-1zM0 5h1v1h-1zM2 5h1v1h-1zM5 5h1v1h-1zM7 5h1v1h-1zM0 6h1v1h-1zM2 6h1v1h-1zM5 6h1v1h-1zM7 6h1v1h-1zM0 7h1v1h-1zM2 7h1v1h-1zM5 7h1v1h-1zM7 7h1v1h-1zM0 8h1v1h-1zM3 8h1v1h-1zM4 8h1v1h-1zM7 8h1v1h-1zM1 9h1v1h-1zM6 9h1v1h-1zM2 10h1v1h-1zM3 10h1v1h-1zM4 10h1v1h-1zM5 10h1v1h-1z" fill="#0c0c0c"/></svg>
<svg class="i" style="left:865px;top:350px" width="7" height="4" viewBox="0 0 7 4"><path d="M0 0h7v1h-7z M1 1h5v1h-5z M2 2h3v1h-3z M3 3h1v1h-1z" fill="#0c0c0c" shape-rendering="crispEdges"/></svg>
<div class="t " style="right:763.24px;top:366px;height:21px;line-height:21px;letter-spacing:-0.239px;">Használható eladáskor:</div>
<div class="cb" style="left:277px;top:369px"><div class="cbi"></div></div>
<div class="t " style="left:295.1px;top:366px;height:21px;line-height:21px;letter-spacing:-0.344px;">Használható beszerzéskor:</div>
<div class="cb" style="left:437px;top:369px"><div class="cbi"></div></div>
<div class="hd" style="top:394px"></div>
<div class="t ht" style="left:35.6px;top:395px;height:25px;line-height:25px;letter-spacing:0.079px;">Megjelenítés</div>
<div class="t " style="right:763.04px;top:425px;height:21px;line-height:21px;letter-spacing:-0.036px;">Dátum :</div>
<div class="f" style="left:277px;top:424px;width:67px;height:19px"></div>
<svg class="i" style="left:333px;top:434px" width="8" height="2" viewBox="0 0 8 2"><path d="M0 0h2v2h-2z M3 0h2v2h-2z M6 0h2v2h-2z" fill="#222"/></svg>
<div class="t " style="left:279.5px;top:425px;height:21px;line-height:21px;letter-spacing:-0.656px;">12.07.05.</div>
<div class="t " style="right:763.12px;top:449px;height:21px;line-height:21px;letter-spacing:-0.117px;">Idegen azonosító típus:</div>
<div class="f" style="left:277px;top:448px;width:215px;height:19px"></div>
<svg class="i" style="left:481px;top:453px" width="8" height="11" viewBox="0 0 8 11" shape-rendering="crispEdges"><path d="M3 0h1v1h-1zM4 0h1v1h-1zM5 0h1v1h-1zM6 0h1v1h-1zM2 1h1v1h-1zM7 1h1v1h-1zM0 2h1v1h-1zM2 2h1v1h-1zM5 2h1v1h-1zM7 2h1v1h-1zM0 3h1v1h-1zM2 3h1v1h-1zM5 3h1v1h-1zM7 3h1v1h-1zM0 4h1v1h-1zM2 4h1v1h-1zM5 4h1v1h-1zM7 4h1v1h-1zM0 5h1v1h-1zM2 5h1v1h-1zM5 5h1v1h-1zM7 5h1v1h-1zM0 6h1v1h-1zM2 6h1v1h-1zM5 6h1v1h-1zM7 6h1v1h-1zM0 7h1v1h-1zM2 7h1v1h-1zM5 7h1v1h-1zM7 7h1v1h-1zM0 8h1v1h-1zM3 8h1v1h-1zM4 8h1v1h-1zM7 8h1v1h-1zM1 9h1v1h-1zM6 9h1v1h-1zM2 10h1v1h-1zM3 10h1v1h-1zM4 10h1v1h-1zM5 10h1v1h-1z" fill="#0c0c0c"/></svg>
<svg class="i" style="left:468px;top:457px" width="7" height="4" viewBox="0 0 7 4"><path d="M0 0h7v1h-7z M1 1h5v1h-5z M2 2h3v1h-3z M3 3h1v1h-1z" fill="#0c0c0c" shape-rendering="crispEdges"/></svg>
<div class="t " style="right:763.41px;top:473px;height:21px;line-height:21px;letter-spacing:-0.415px;">Rendezettség 1:</div>
<div class="f" style="left:277px;top:472px;width:107px;height:19px"></div>
<svg class="i" style="left:374px;top:481px" width="7" height="4" viewBox="0 0 7 4"><path d="M0 0h7v1h-7z M1 1h5v1h-5z M2 2h3v1h-3z M3 3h1v1h-1z" fill="#0c0c0c" shape-rendering="crispEdges"/></svg>
<div class="t " style="left:279.9px;top:473px;height:21px;line-height:21px;letter-spacing:-0.329px;">Raktár</div>
<div class="f" style="left:391px;top:472px;width:131px;height:19px"></div>
<svg class="i" style="left:512px;top:481px" width="7" height="4" viewBox="0 0 7 4"><path d="M0 0h7v1h-7z M1 1h5v1h-5z M2 2h3v1h-3z M3 3h1v1h-1z" fill="#0c0c0c" shape-rendering="crispEdges"/></svg>
<div class="t " style="left:393.6px;top:473px;height:21px;line-height:21px;letter-spacing:-0.080px;">Kód</div>
<div class="t " style="right:763.41px;top:497px;height:21px;line-height:21px;letter-spacing:-0.415px;">Rendezettség 2:</div>
<div class="f" style="left:277px;top:496px;width:133px;height:19px"></div>
<svg class="i" style="left:400px;top:505px" width="7" height="4" viewBox="0 0 7 4"><path d="M0 0h7v1h-7z M1 1h5v1h-5z M2 2h3v1h-3z M3 3h1v1h-1z" fill="#0c0c0c" shape-rendering="crispEdges"/></svg>
<div class="f" style="left:417px;top:496px;width:131px;height:19px"></div>
<svg class="i" style="left:538px;top:505px" width="7" height="4" viewBox="0 0 7 4"><path d="M0 0h7v1h-7z M1 1h5v1h-5z M2 2h3v1h-3z M3 3h1v1h-1z" fill="#0c0c0c" shape-rendering="crispEdges"/></svg>
<div class="t " style="right:763.41px;top:521px;height:21px;line-height:21px;letter-spacing:-0.415px;">Rendezettség 3:</div>
<div class="f" style="left:277px;top:520px;width:133px;height:19px"></div>
<svg class="i" style="left:400px;top:529px" width="7" height="4" viewBox="0 0 7 4"><path d="M0 0h7v1h-7z M1 1h5v1h-5z M2 2h3v1h-3z M3 3h1v1h-1z" fill="#0c0c0c" shape-rendering="crispEdges"/></svg>
<div class="f" style="left:417px;top:520px;width:131px;height:19px"></div>
<svg class="i" style="left:538px;top:529px" width="7" height="4" viewBox="0 0 7 4"><path d="M0 0h7v1h-7z M1 1h5v1h-5z M2 2h3v1h-3z M3 3h1v1h-1z" fill="#0c0c0c" shape-rendering="crispEdges"/></svg>
<div class="t " style="right:763.41px;top:545px;height:21px;line-height:21px;letter-spacing:-0.415px;">Rendezettség 4:</div>
<div class="f" style="left:277px;top:544px;width:133px;height:19px"></div>
<svg class="i" style="left:400px;top:553px" width="7" height="4" viewBox="0 0 7 4"><path d="M0 0h7v1h-7z M1 1h5v1h-5z M2 2h3v1h-3z M3 3h1v1h-1z" fill="#0c0c0c" shape-rendering="crispEdges"/></svg>
<div class="f" style="left:417px;top:544px;width:131px;height:19px"></div>
<svg class="i" style="left:538px;top:553px" width="7" height="4" viewBox="0 0 7 4"><path d="M0 0h7v1h-7z M1 1h5v1h-5z M2 2h3v1h-3z M3 3h1v1h-1z" fill="#0c0c0c" shape-rendering="crispEdges"/></svg>
<div class="t " style="right:763.51px;top:569px;height:21px;line-height:21px;letter-spacing:-0.509px;">Érték:</div>
<div class="f" style="left:277px;top:568px;width:180px;height:19px"></div>
<svg class="i" style="left:447px;top:577px" width="7" height="4" viewBox="0 0 7 4"><path d="M0 0h7v1h-7z M1 1h5v1h-5z M2 2h3v1h-3z M3 3h1v1h-1z" fill="#0c0c0c" shape-rendering="crispEdges"/></svg>
<div class="t " style="left:279.9px;top:569px;height:21px;line-height:21px;letter-spacing:-0.079px;">Nincs</div>
<div class="t " style="left:464.1px;top:569px;height:21px;line-height:21px;letter-spacing:-0.603px;">Deviza:</div>
<div class="f d" style="left:506px;top:568px;width:61px;height:19px"></div>
<svg class="i" style="left:556px;top:573px" width="8" height="11" viewBox="0 0 8 11" shape-rendering="crispEdges"><path d="M3 0h1v1h-1zM4 0h1v1h-1zM5 0h1v1h-1zM6 0h1v1h-1zM2 1h1v1h-1zM7 1h1v1h-1zM0 2h1v1h-1zM2 2h1v1h-1zM5 2h1v1h-1zM7 2h1v1h-1zM0 3h1v1h-1zM2 3h1v1h-1zM5 3h1v1h-1zM7 3h1v1h-1zM0 4h1v1h-1zM2 4h1v1h-1zM5 4h1v1h-1zM7 4h1v1h-1zM0 5h1v1h-1zM2 5h1v1h-1zM5 5h1v1h-1zM7 5h1v1h-1zM0 6h1v1h-1zM2 6h1v1h-1zM5 6h1v1h-1zM7 6h1v1h-1zM0 7h1v1h-1zM2 7h1v1h-1zM5 7h1v1h-1zM7 7h1v1h-1zM0 8h1v1h-1zM3 8h1v1h-1zM4 8h1v1h-1zM7 8h1v1h-1zM1 9h1v1h-1zM6 9h1v1h-1zM2 10h1v1h-1zM3 10h1v1h-1zM4 10h1v1h-1zM5 10h1v1h-1z" fill="#0c0c0c"/></svg>
<div class="t " style="left:508.9px;top:569px;height:21px;line-height:21px;letter-spacing:-0.636px;">HUF</div>
<div class="t " style="right:763.06px;top:593px;height:21px;line-height:21px;letter-spacing:-0.060px;">Ügyfél:</div>
<div class="f" style="left:277px;top:592px;width:145px;height:19px"></div>
<svg class="i" style="left:411px;top:597px" width="8" height="11" viewBox="0 0 8 11" shape-rendering="crispEdges"><path d="M3 0h1v1h-1zM4 0h1v1h-1zM5 0h1v1h-1zM6 0h1v1h-1zM2 1h1v1h-1zM7 1h1v1h-1zM0 2h1v1h-1zM2 2h1v1h-1zM5 2h1v1h-1zM7 2h1v1h-1zM0 3h1v1h-1zM2 3h1v1h-1zM5 3h1v1h-1zM7 3h1v1h-1zM0 4h1v1h-1zM2 4h1v1h-1zM5 4h1v1h-1zM7 4h1v1h-1zM0 5h1v1h-1zM2 5h1v1h-1zM5 5h1v1h-1zM7 5h1v1h-1zM0 6h1v1h-1zM2 6h1v1h-1zM5 6h1v1h-1zM7 6h1v1h-1zM0 7h1v1h-1zM2 7h1v1h-1zM5 7h1v1h-1zM7 7h1v1h-1zM0 8h1v1h-1zM3 8h1v1h-1zM4 8h1v1h-1zM7 8h1v1h-1zM1 9h1v1h-1zM6 9h1v1h-1zM2 10h1v1h-1zM3 10h1v1h-1zM4 10h1v1h-1zM5 10h1v1h-1z" fill="#0c0c0c"/></svg>
<svg class="i" style="left:398px;top:601px" width="7" height="4" viewBox="0 0 7 4"><path d="M0 0h7v1h-7z M1 1h5v1h-5z M2 2h3v1h-3z M3 3h1v1h-1z" fill="#0c0c0c" shape-rendering="crispEdges"/></svg>
<div class="f" style="left:429px;top:592px;width:390px;height:19px"></div>
<svg class="i" style="left:808px;top:597px" width="8" height="11" viewBox="0 0 8 11" shape-rendering="crispEdges"><path d="M3 0h1v1h-1zM4 0h1v1h-1zM5 0h1v1h-1zM6 0h1v1h-1zM2 1h1v1h-1zM7 1h1v1h-1zM0 2h1v1h-1zM2 2h1v1h-1zM5 2h1v1h-1zM7 2h1v1h-1zM0 3h1v1h-1zM2 3h1v1h-1zM5 3h1v1h-1zM7 3h1v1h-1zM0 4h1v1h-1zM2 4h1v1h-1zM5 4h1v1h-1zM7 4h1v1h-1zM0 5h1v1h-1zM2 5h1v1h-1zM5 5h1v1h-1zM7 5h1v1h-1zM0 6h1v1h-1zM2 6h1v1h-1zM5 6h1v1h-1zM7 6h1v1h-1zM0 7h1v1h-1zM2 7h1v1h-1zM5 7h1v1h-1zM7 7h1v1h-1zM0 8h1v1h-1zM3 8h1v1h-1zM4 8h1v1h-1zM7 8h1v1h-1zM1 9h1v1h-1zM6 9h1v1h-1zM2 10h1v1h-1zM3 10h1v1h-1zM4 10h1v1h-1zM5 10h1v1h-1z" fill="#0c0c0c"/></svg>
<svg class="i" style="left:795px;top:601px" width="7" height="4" viewBox="0 0 7 4"><path d="M0 0h7v1h-7z M1 1h5v1h-5z M2 2h3v1h-3z M3 3h1v1h-1z" fill="#0c0c0c" shape-rendering="crispEdges"/></svg>
<div class="t " style="right:763.20px;top:617px;height:21px;line-height:21px;letter-spacing:-0.197px;">Fizetési mód:</div>
<div class="f d" style="left:277px;top:616px;width:249px;height:19px"></div>
<svg class="i" style="left:515px;top:621px" width="8" height="11" viewBox="0 0 8 11" shape-rendering="crispEdges"><path d="M3 0h1v1h-1zM4 0h1v1h-1zM5 0h1v1h-1zM6 0h1v1h-1zM2 1h1v1h-1zM7 1h1v1h-1zM0 2h1v1h-1zM2 2h1v1h-1zM5 2h1v1h-1zM7 2h1v1h-1zM0 3h1v1h-1zM2 3h1v1h-1zM5 3h1v1h-1zM7 3h1v1h-1zM0 4h1v1h-1zM2 4h1v1h-1zM5 4h1v1h-1zM7 4h1v1h-1zM0 5h1v1h-1zM2 5h1v1h-1zM5 5h1v1h-1zM7 5h1v1h-1zM0 6h1v1h-1zM2 6h1v1h-1zM5 6h1v1h-1zM7 6h1v1h-1zM0 7h1v1h-1zM2 7h1v1h-1zM5 7h1v1h-1zM7 7h1v1h-1zM0 8h1v1h-1zM3 8h1v1h-1zM4 8h1v1h-1zM7 8h1v1h-1zM1 9h1v1h-1zM6 9h1v1h-1zM2 10h1v1h-1zM3 10h1v1h-1zM4 10h1v1h-1zM5 10h1v1h-1z" fill="#0c0c0c"/></svg>
<div class="t " style="right:763.05px;top:641px;height:21px;line-height:21px;letter-spacing:-0.051px;">Ártábla:</div>
<div class="f d" style="left:277px;top:640px;width:249px;height:19px"></div>
<svg class="i" style="left:515px;top:645px" width="8" height="11" viewBox="0 0 8 11" shape-rendering="crispEdges"><path d="M3 0h1v1h-1zM4 0h1v1h-1zM5 0h1v1h-1zM6 0h1v1h-1zM2 1h1v1h-1zM7 1h1v1h-1zM0 2h1v1h-1zM2 2h1v1h-1zM5 2h1v1h-1zM7 2h1v1h-1zM0 3h1v1h-1zM2 3h1v1h-1zM5 3h1v1h-1zM7 3h1v1h-1zM0 4h1v1h-1zM2 4h1v1h-1zM5 4h1v1h-1zM7 4h1v1h-1zM0 5h1v1h-1zM2 5h1v1h-1zM5 5h1v1h-1zM7 5h1v1h-1zM0 6h1v1h-1zM2 6h1v1h-1zM5 6h1v1h-1zM7 6h1v1h-1zM0 7h1v1h-1zM2 7h1v1h-1zM5 7h1v1h-1zM7 7h1v1h-1zM0 8h1v1h-1zM3 8h1v1h-1zM4 8h1v1h-1zM7 8h1v1h-1zM1 9h1v1h-1zM6 9h1v1h-1zM2 10h1v1h-1zM3 10h1v1h-1zM4 10h1v1h-1zM5 10h1v1h-1z" fill="#0c0c0c"/></svg>
<div class="t " style="right:763.33px;top:665px;height:21px;line-height:21px;letter-spacing:-0.327px;">Gyártási számok:</div>
<div class="f" style="left:277px;top:664px;width:108px;height:19px"></div>
<svg class="i" style="left:375px;top:673px" width="7" height="4" viewBox="0 0 7 4"><path d="M0 0h7v1h-7z M1 1h5v1h-5z M2 2h3v1h-3z M3 3h1v1h-1z" fill="#0c0c0c" shape-rendering="crispEdges"/></svg>
<div class="t " style="left:279.9px;top:665px;height:21px;line-height:21px;letter-spacing:-0.213px;">Nem szerepelnek</div>
<div class="t " style="left:392.0px;top:665px;height:21px;line-height:21px;letter-spacing:-0.143px;">Mennyiségegység bontás:</div>
<div class="cb cbd" style="left:534px;top:668px"></div>
<div class="t " style="left:551.9px;top:665px;height:21px;line-height:21px;letter-spacing:-0.206px;">Nulla készlet:</div>
<div class="f" style="left:626px;top:664px;width:93px;height:19px"></div>
<svg class="i" style="left:709px;top:673px" width="7" height="4" viewBox="0 0 7 4"><path d="M0 0h7v1h-7z M1 1h5v1h-5z M2 2h3v1h-3z M3 3h1v1h-1z" fill="#0c0c0c" shape-rendering="crispEdges"/></svg>
<div class="t " style="left:629.1px;top:665px;height:21px;line-height:21px;letter-spacing:-0.321px;">Nem szerepel</div>
<div class="t " style="left:727.1px;top:665px;height:21px;line-height:21px;letter-spacing:-0.160px;">Előfeldolgozások:</div>
<div class="cb" style="left:824px;top:668px"><div class="cbg"></div></div>
<div class="t " style="right:763.32px;top:689px;height:21px;line-height:21px;letter-spacing:-0.325px;">Mennyiség összesítés:</div>
<div class="cb" style="left:277px;top:692px"><div class="cbg"></div><svg width="11" height="11" viewBox="0 0 11 11" style="left:0;top:0"><path d="M2.3 6.2 L5 9.2 L8.9 1.5" fill="none" stroke="#3c4f9b" stroke-width="1.9"/></svg></div>
<div class="t " style="left:294.9px;top:689px;height:21px;line-height:21px;letter-spacing:0.112px;">Átváltott mennyiség:</div>
<div class="f" style="left:411px;top:688px;width:122px;height:19px"></div>
<svg class="i" style="left:522px;top:693px" width="8" height="11" viewBox="0 0 8 11" shape-rendering="crispEdges"><path d="M3 0h1v1h-1zM4 0h1v1h-1zM5 0h1v1h-1zM6 0h1v1h-1zM2 1h1v1h-1zM7 1h1v1h-1zM0 2h1v1h-1zM2 2h1v1h-1zM5 2h1v1h-1zM7 2h1v1h-1zM0 3h1v1h-1zM2 3h1v1h-1zM5 3h1v1h-1zM7 3h1v1h-1zM0 4h1v1h-1zM2 4h1v1h-1zM5 4h1v1h-1zM7 4h1v1h-1zM0 5h1v1h-1zM2 5h1v1h-1zM5 5h1v1h-1zM7 5h1v1h-1zM0 6h1v1h-1zM2 6h1v1h-1zM5 6h1v1h-1zM7 6h1v1h-1zM0 7h1v1h-1zM2 7h1v1h-1zM5 7h1v1h-1zM7 7h1v1h-1zM0 8h1v1h-1zM3 8h1v1h-1zM4 8h1v1h-1zM7 8h1v1h-1zM1 9h1v1h-1zM6 9h1v1h-1zM2 10h1v1h-1zM3 10h1v1h-1zM4 10h1v1h-1zM5 10h1v1h-1z" fill="#0c0c0c"/></svg>
<svg class="i" style="left:509px;top:697px" width="7" height="4" viewBox="0 0 7 4"><path d="M0 0h7v1h-7z M1 1h5v1h-5z M2 2h3v1h-3z M3 3h1v1h-1z" fill="#0c0c0c" shape-rendering="crispEdges"/></svg>
<div class="hd" style="top:717px"></div>
<svg class="i" style="left:20px;top:725px" width="10" height="7" viewBox="0 0 10 7"><path d="M1.4 6.1 L5 2.3 L8.6 6.1" fill="none" stroke="#0a0a0a" stroke-width="1.9"/></svg>
<div class="t ht" style="left:35.6px;top:718px;height:25px;line-height:25px;letter-spacing:-0.635px;">Fordítás</div>
<div class="t " style="right:763.05px;top:748px;height:21px;line-height:21px;letter-spacing:-0.048px;">Adat nyelv:</div>
<div class="f" style="left:277px;top:747px;width:249px;height:19px"></div>
<svg class="i" style="left:515px;top:752px" width="8" height="11" viewBox="0 0 8 11" shape-rendering="crispEdges"><path d="M3 0h1v1h-1zM4 0h1v1h-1zM5 0h1v1h-1zM6 0h1v1h-1zM2 1h1v1h-1zM7 1h1v1h-1zM0 2h1v1h-1zM2 2h1v1h-1zM5 2h1v1h-1zM7 2h1v1h-1zM0 3h1v1h-1zM2 3h1v1h-1zM5 3h1v1h-1zM7 3h1v1h-1zM0 4h1v1h-1zM2 4h1v1h-1zM5 4h1v1h-1zM7 4h1v1h-1zM0 5h1v1h-1zM2 5h1v1h-1zM5 5h1v1h-1zM7 5h1v1h-1zM0 6h1v1h-1zM2 6h1v1h-1zM5 6h1v1h-1zM7 6h1v1h-1zM0 7h1v1h-1zM2 7h1v1h-1zM5 7h1v1h-1zM7 7h1v1h-1zM0 8h1v1h-1zM3 8h1v1h-1zM4 8h1v1h-1zM7 8h1v1h-1zM1 9h1v1h-1zM6 9h1v1h-1zM2 10h1v1h-1zM3 10h1v1h-1zM4 10h1v1h-1zM5 10h1v1h-1z" fill="#0c0c0c"/></svg>
<svg class="i" style="left:502px;top:756px" width="7" height="4" viewBox="0 0 7 4"><path d="M0 0h7v1h-7z M1 1h5v1h-5z M2 2h3v1h-3z M3 3h1v1h-1z" fill="#0c0c0c" shape-rendering="crispEdges"/></svg>
<div class="t " style="right:763.16px;top:772px;height:21px;line-height:21px;letter-spacing:-0.164px;">Felirat nyelv:</div>
<div class="f" style="left:277px;top:771px;width:249px;height:19px"></div>
<svg class="i" style="left:515px;top:776px" width="8" height="11" viewBox="0 0 8 11" shape-rendering="crispEdges"><path d="M3 0h1v1h-1zM4 0h1v1h-1zM5 0h1v1h-1zM6 0h1v1h-1zM2 1h1v1h-1zM7 1h1v1h-1zM0 2h1v1h-1zM2 2h1v1h-1zM5 2h1v1h-1zM7 2h1v1h-1zM0 3h1v1h-1zM2 3h1v1h-1zM5 3h1v1h-1zM7 3h1v1h-1zM0 4h1v1h-1zM2 4h1v1h-1zM5 4h1v1h-1zM7 4h1v1h-1zM0 5h1v1h-1zM2 5h1v1h-1zM5 5h1v1h-1zM7 5h1v1h-1zM0 6h1v1h-1zM2 6h1v1h-1zM5 6h1v1h-1zM7 6h1v1h-1zM0 7h1v1h-1zM2 7h1v1h-1zM5 7h1v1h-1zM7 7h1v1h-1zM0 8h1v1h-1zM3 8h1v1h-1zM4 8h1v1h-1zM7 8h1v1h-1zM1 9h1v1h-1zM6 9h1v1h-1zM2 10h1v1h-1zM3 10h1v1h-1zM4 10h1v1h-1zM5 10h1v1h-1z" fill="#0c0c0c"/></svg>
<svg class="i" style="left:502px;top:780px" width="7" height="4" viewBox="0 0 7 4"><path d="M0 0h7v1h-7z M1 1h5v1h-5z M2 2h3v1h-3z M3 3h1v1h-1z" fill="#0c0c0c" shape-rendering="crispEdges"/></svg>
<div class="btn" style="left:874px;top:820px;width:71px;border-color:#3c7fb1;box-shadow:inset 0 0 0 1px #46d2f6,inset 0 0 0 2px rgba(255,255,255,.5)">Nyomtatás...</div>
<div class="btn" style="left:954px;top:820px;width:65px">Mégse</div>
</body></html>
